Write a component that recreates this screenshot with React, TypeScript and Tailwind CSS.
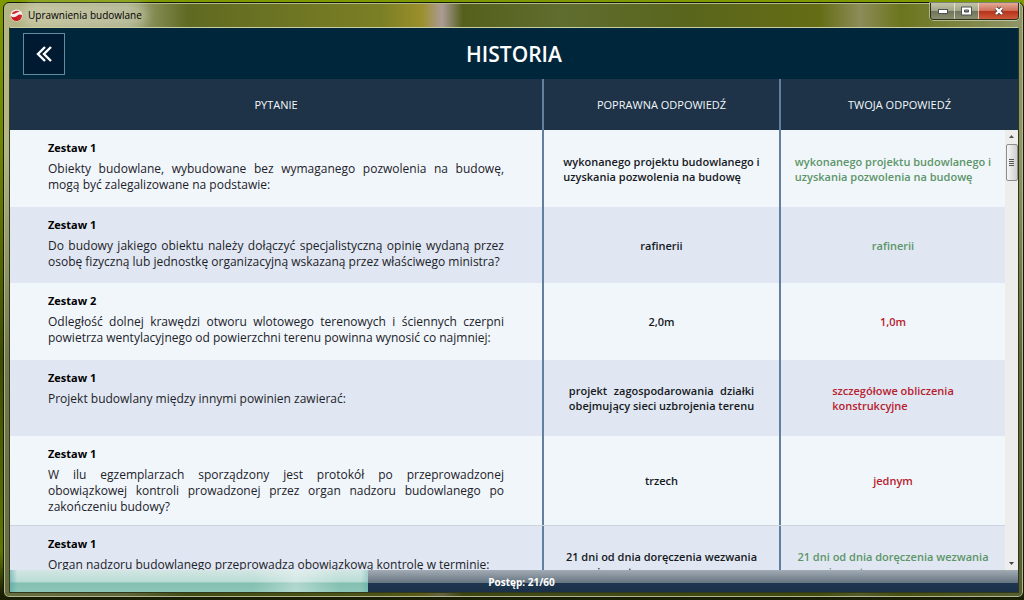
type Row = {
  set: string;
  question: string;
  answer: string[];
  given: string[];
  correct: boolean;
  justify?: boolean;
};

const rows: Row[] = [
  {
    set: "Zestaw 1",
    question: "Obiekty budowlane, wybudowane bez wymaganego pozwolenia na budowę, mogą być zalegalizowane na podstawie:",
    answer: ["wykonanego projektu budowlanego i", "uzyskania pozwolenia na budowę"],
    given: ["wykonanego projektu budowlanego i", "uzyskania pozwolenia na budowę"],
    correct: true,
  },
  {
    set: "Zestaw 1",
    question:
      "Do budowy jakiego obiektu należy dołączyć specjalistyczną opinię wydaną przez osobę fizyczną lub jednostkę organizacyjną wskazaną przez właściwego ministra?",
    answer: ["rafinerii"],
    given: ["rafinerii"],
    correct: true,
  },
  {
    set: "Zestaw 2",
    question:
      "Odległość dolnej krawędzi otworu wlotowego terenowych i ściennych czerpni powietrza wentylacyjnego od powierzchni terenu powinna wynosić co najmniej:",
    answer: ["2,0m"],
    given: ["1,0m"],
    correct: false,
  },
  {
    set: "Zestaw 1",
    question: "Projekt budowlany między innymi powinien zawierać:",
    answer: ["projekt zagospodarowania działki", "obejmujący sieci uzbrojenia terenu"],
    given: ["szczegółowe obliczenia", "konstrukcyjne"],
    correct: false,
    justify: true,
  },
  {
    set: "Zestaw 1",
    question:
      "W ilu egzemplarzach sporządzony jest protokół po przeprowadzonej obowiązkowej kontroli prowadzonej przez organ nadzoru budowlanego po zakończeniu budowy?",
    answer: ["trzech"],
    given: ["jednym"],
    correct: false,
  },
  {
    set: "Zestaw 1",
    question: "Organ nadzoru budowlanego przeprowadza obowiązkową kontrolę w terminie:",
    answer: ["21 dni od dnia doręczenia wezwania", "przez inwestora"],
    given: ["21 dni od dnia doręczenia wezwania", "przez inwestora"],
    correct: true,
  },
];

const done = 21;
const total = 60;

function Lines({ lines, justify }: { lines: string[]; justify?: boolean }) {
  return (
    <span className="inline-block text-left">
      {lines.map((line, i) => (
        <span key={line} className={justify && i === 0 ? "block [text-align-last:justify]" : "block"}>
          {line}
        </span>
      ))}
    </span>
  );
}

function TitleBar() {
  const btn = "flex h-full items-center justify-center border-white/60";
  const glass = "bg-[linear-gradient(#c3c5a8_0%,#a2a487_48%,#6f7358_50%,#8b8f70_100%)]";
  return (
    <div className="flex h-[24px] items-start justify-between pl-px">
      <div className="flex h-full items-center gap-[5px]">
        <svg viewBox="0 0 14 14" className="size-[13px]" aria-hidden="true">
          <circle cx="7" cy="7" r="6.5" fill="#f3eeee" />
          <path d="M1 7.5C3 9.5 6 9 8 7 9.5 5.5 11.5 5.5 13 6.5 13 10.5 10.5 13 7 13 4 13 1.5 11 1 7.5Z" fill="#c9161c" />
          <path d="M2 5C4 2 8 1 10.5 3 7.5 3 5.5 6.5 2 5Z" fill="#d5252b" />
        </svg>
        <span className="rounded-full bg-white/25 text-[10px] leading-[16px] text-black shadow-[0_0_8px_6px_rgba(255,255,255,0.25)]">
          Uprawnienia budowlane
        </span>
      </div>
      <div className="flex h-[17px] overflow-hidden rounded-b-[4px] border border-t-0 border-[#2c3018] shadow-[0_0_0_1px_rgba(255,255,255,0.45)]">
        <button type="button" aria-label="Minimalizuj" className={`${btn} ${glass} w-[24px] border-r`}>
          <svg viewBox="0 0 10 6" className="h-[6px] w-[10px]" aria-hidden="true">
            <rect x="0.5" y="1.5" width="9" height="4" fill="#fff" stroke="#4d5055" />
          </svg>
        </button>
        <button type="button" aria-label="Maksymalizuj" className={`${btn} ${glass} w-[24px] border-r`}>
          <svg viewBox="0 0 11 10" className="h-[10px] w-[11px]" aria-hidden="true">
            <path d="M0.5 1h10v8h-10zM3.5 4v2h4v-2z" fill="#fff" fillRule="evenodd" stroke="#4d5055" />
          </svg>
        </button>
        <button
          type="button"
          aria-label="Zamknij"
          className={`${btn} w-[39px] bg-[linear-gradient(#e3ab98_0%,#cf6f58_48%,#b5301a_50%,#cf5a3a_100%)]`}
        >
          <svg viewBox="0 0 10 10" className="size-[10px]" aria-hidden="true">
            <path d="M2 2l6 6M8 2l-6 6" stroke="#4d3f45" strokeWidth="4" />
            <path d="M2 2l6 6M8 2l-6 6" stroke="#fff" strokeWidth="2.4" />
          </svg>
        </button>
      </div>
    </div>
  );
}

function ScrollBar() {
  return (
    <div className="flex w-[13px] shrink-0 flex-col items-center justify-between bg-[#ededec] py-1" aria-hidden="true">
      <div className="flex w-full flex-col items-center gap-[5px]">
        <svg viewBox="0 0 5 5" className="size-[5px]">
          <path d="M0 4L2.5 1 5 4Z" fill="#555" />
        </svg>
        <div className="flex h-[37px] w-[12px] flex-col items-center justify-center gap-px rounded-[2px] border border-[#8d8d8d] bg-linear-to-r from-[#f6f6f6] to-[#cfcfcf]">
          <span className="h-px w-[5px] bg-[#555]" />
          <span className="h-px w-[5px] bg-[#555]" />
          <span className="h-px w-[5px] bg-[#555]" />
          <span className="h-px w-[5px] bg-[#555]" />
        </div>
      </div>
      <svg viewBox="0 0 5 5" className="size-[5px]">
        <path d="M0 1L2.5 4 5 1Z" fill="#444" />
      </svg>
    </div>
  );
}

export default function App() {
  const th = "flex items-center justify-center pt-px text-[11px] font-normal text-[#f4f8fb]";
  const td = "flex items-center justify-center border-l-2 border-[#627f9f] text-[11px] leading-[15px] font-semibold";

  return (
    <div className="flex h-screen flex-col bg-[linear-gradient(#7f9a00_0%,#6d8500_25%,#3c4c00_60%,#5f7800_92%,#1a2004_99%)] pt-[2px] pb-[2px] pl-[3px] font-['Open_Sans','Noto_Sans',sans-serif]">
      {/* Glass frame: dark veil towards the bottom over the blurred wallpaper tones */}
      <div className="flex min-h-0 flex-1 flex-col rounded-[6px] border border-[#15180a] bg-[linear-gradient(transparent_25%,rgba(40,48,8,0.45)_60%,rgba(40,48,8,0.55)_100%),linear-gradient(90deg,#b5b585_0%,#a3a77a_12%,#5f6a22_18%,#7b7f24_37%,#9b8f2c_41%,#ab9b96_43%,#55601c_45%,#5f6d2f_55%,#59651c_67%,#646d14_80%,#8c8c58_84%,#6b751d_88%,#8f9568_100%)] pr-[4px] pb-[4px] pl-[5px] shadow-[inset_0_0_0_1px_#b4b98c]">
        <TitleBar />
        <main className="flex min-h-0 flex-1 flex-col border border-t-[#c9cfa0] border-x-[#30381a] border-b-[#30381a] bg-[#f1f6fb]">
          <header className="grid h-[51px] shrink-0 grid-cols-[1fr_auto_1fr] items-center bg-[#00263c] px-[13px]">
            <button
              type="button"
              aria-label="Wstecz"
              className="flex size-[42px] items-center justify-center border border-[#648a9f] bg-[#001b31]"
            >
              <svg viewBox="0 0 16 16" className="size-[16px]" fill="none" stroke="#fff" strokeWidth="2.4" aria-hidden="true">
                <path d="M9 1L2 8l7 7M15 1L8 8l7 7" />
              </svg>
            </button>
            <h1 className="pt-[2px] text-[21px] font-semibold text-white">HISTORIA</h1>
          </header>

          <table className="flex min-h-0 flex-1 flex-col">
            <thead className="block shrink-0 bg-[#1e3348]">
              <tr className="grid h-[51px] grid-cols-[1fr_237px_239px]">
                <th className={th}>PYTANIE</th>
                <th className={`${th} border-l-2 border-[#627f9f]`}>POPRAWNA ODPOWIEDŹ</th>
                <th className={`${th} border-l-2 border-[#627f9f]`}>TWOJA ODPOWIEDŹ</th>
              </tr>
            </thead>
            <tbody className="flex min-h-0 flex-1 overflow-hidden">
              <tr className="contents">
                <td className="min-w-0 flex-1 p-0">
                  <table className="block">
                    <tbody className="block">
                      {rows.map((row) => (
                        <tr
                          key={row.question}
                          className="grid grid-cols-[1fr_237px_226px] border-[#cdd4e0] last:min-h-[80px] last:border-t odd:min-h-[77px] odd:bg-[#f1f6fb] even:min-h-[76px] even:bg-[#e0e7f2]"
                        >
                          <td className="px-[38px] pt-[10px] pb-[10px]">
                            <p className="text-[11px] leading-[16px] font-bold text-black">{row.set}</p>
                            <p className="mt-[5px] text-justify text-[12px] leading-[16px] text-[#1c2229]">{row.question}</p>
                          </td>
                          <td className={`${td} text-[#16191d]`}>
                            <Lines lines={row.answer} justify={row.justify} />
                          </td>
                          <td className={td}>
                            <span className={row.correct ? "text-[#5c9568]" : "text-[#b8202e]"}>
                              <Lines lines={row.given} />
                            </span>
                          </td>
                        </tr>
                      ))}
                    </tbody>
                  </table>
                </td>
                <td className="flex p-0">
                  <ScrollBar />
                </td>
              </tr>
            </tbody>
          </table>

          <div
            role="progressbar"
            aria-label="Postęp"
            aria-valuenow={done}
            aria-valuemax={total}
            className="grid h-[22px] shrink-0 bg-[linear-gradient(#a3abb4_0%,#657581_58%,#1e3550_60%,#1a3148_100%)]"
          >
            <div
              className="col-start-1 row-start-1 bg-[linear-gradient(90deg,rgba(70,160,160,0.5)_0%,transparent_2%,transparent_68%,rgba(255,255,255,0.35)_80%,transparent_92%,transparent_98%,rgba(70,160,160,0.3)_100%),linear-gradient(#d3e6e3_0%,#b9dcd5_55%,#83bfb0_58%,#8cc6b8_100%)]"
              style={{ width: `calc(${(done / total) * 100}% + 5px)` }}
            />
            <p className="col-start-1 row-start-1 self-center pt-px pl-[15px] text-center text-[10px] leading-[16px] font-bold text-white">
              Postęp: {done}/{total}
            </p>
          </div>
        </main>
      </div>
    </div>
  );
}
